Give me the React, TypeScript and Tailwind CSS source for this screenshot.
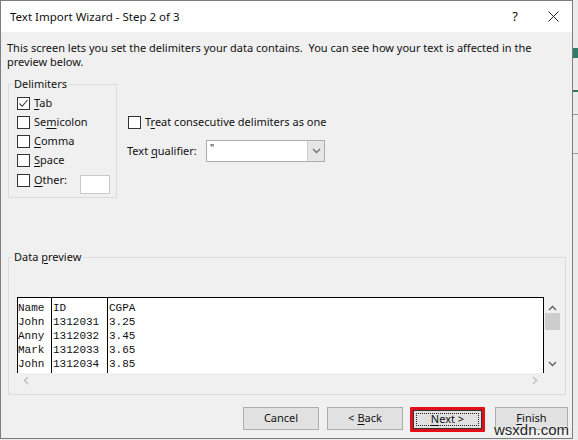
import React from 'react'

const ui = { fontFamily: '"Noto Sans", "Open Sans", sans-serif' }
const mono = { fontFamily: '"Liberation Mono", "Courier New", monospace' }

const rows = [
  ['Name', 'ID', 'CGPA'],
  ['John', '1312031', '3.25'],
  ['Anny', '1312032', '3.45'],
  ['Mark', '1312033', '3.65'],
  ['John', '1312034', '3.85'],
]

function Box({ checked }: { checked?: boolean }) {
  return (
    <span className="w-[13px] h-[13px] border border-[#333] bg-white flex items-center justify-center shrink-0">
      {checked && (
        <svg width="11" height="11" viewBox="0 0 11 11">
          <path d="M1.5 5.5 L4.2 8.3 L9.5 2" fill="none" stroke="#333" strokeWidth="1.1" />
        </svg>
      )}
    </span>
  )
}

function Check({ pre, k, post, checked }: { pre?: string; k: string; post: string; checked?: boolean }) {
  return (
    <div className="h-[19px] flex items-center gap-[4px]">
      <Box checked={checked} />
      <span>
        {pre}
        <span className="underline underline-offset-2">{k}</span>
        {post}
      </span>
    </div>
  )
}

function Chevron({ up, color = '#606060' }: { up?: boolean; color?: string }) {
  return (
    <svg width="9" height="6" viewBox="0 0 9 6">
      <path d={up ? 'M1 5 L4.5 1.5 L8 5' : 'M1 1 L4.5 4.5 L8 1'} fill="none" stroke={color} strokeWidth="1.4" />
    </svg>
  )
}

function Button({ children, w }: { children: React.ReactNode; w: string }) {
  return (
    <div className={`${w} h-[23px] bg-[#e1e1e1] border border-[#adadad] flex items-center justify-center`}>
      {children}
    </div>
  )
}

export default function App() {
  return (
    <div className="w-[578px] h-[440px] flex bg-[#ececec] text-[11px] text-[#111] overflow-hidden" style={ui}>
      <div className="relative w-[573px] h-[439px] border border-[#7d7d7d] bg-[#f0f0f0] flex flex-col">
        {/* title bar */}
        <div className="h-[31px] bg-white flex items-center pl-[9px] shrink-0">
          <span className="text-[11.5px]">Text Import Wizard - Step 2 of 3</span>
          <span className="ml-auto mr-[30px] text-[13px]">?</span>
          <svg width="11" height="11" viewBox="0 0 11 11" className="mr-[13px]">
            <path d="M0.5 0.5 L10.5 10.5 M10.5 0.5 L0.5 10.5" stroke="#222" strokeWidth="1" />
          </svg>
        </div>

        <p className="px-[6px] pt-[9px] leading-[14px]">
          This screen lets you set the delimiters your data contains.&nbsp; You can see how your text is affected in the
          <br />
          preview below.
        </p>

        <div className="flex mt-[8px]">
          <fieldset className="ml-[7px] w-[109px] h-[121px] border border-[#dcdcdc] pl-[8px]">
            <legend className="px-[2px] -ml-[5px] leading-[14px]">Delimiters</legend>
            <div className="pt-[3px]">
              <Check k="T" post="ab" checked />
              <Check pre="Se" k="m" post="icolon" />
              <Check k="C" post="omma" />
              <Check k="S" post="pace" />
              <div className="h-[21px] flex items-center gap-[4px]">
                <Box />
                <span>
                  <span className="underline underline-offset-2">O</span>ther:
                </span>
                <div className="ml-[9px] w-[30px] h-[19px] bg-white border border-[#c8c8c8] mt-[7px]" />
              </div>
            </div>
          </fieldset>

          <div className="ml-[11px] pt-[36px] flex flex-col">
            <div className="h-[19px] flex items-center gap-[4px]">
              <Box />
              <span>
                T<span className="underline underline-offset-2">r</span>eat consecutive delimiters as one
              </span>
            </div>
            <div className="flex items-center mt-[8px]">
              <span className="w-[79px] -ml-px">
                Text <span className="underline underline-offset-2">q</span>ualifier:
              </span>
              <div className="w-[119px] h-[22px] bg-white border border-[#adadad] flex">
                <span className="flex-1 pl-[3px] leading-[14px] text-[10px]">"</span>
                <div className="w-[17px] bg-[#e6e6e6] border-l border-[#cfcfcf] flex items-center justify-center">
                  <Chevron color="#707070" />
                </div>
              </div>
            </div>
          </div>
        </div>

        <fieldset className="mx-[7px] mt-[52px] h-[145px] border border-[#dcdcdc] pl-[8px] pr-[4px]">
          <legend className="px-[2px] -ml-[5px] leading-[14px]">
            Data <span className="underline underline-offset-2">p</span>review
          </legend>
          <div className="mt-[33px] flex">
            <div className="w-[527px] h-[76px] bg-white border-t border-l border-r border-black flex text-[11px] leading-[14px] pt-[3px]" style={mono}>
              <div className="w-[34px] border-r border-black -mt-[3px] pt-[3px]">
                {rows.map((r, i) => (
                  <div key={i}>{r[0]}</div>
                ))}
              </div>
              <div className="w-[56px] border-r border-black -mt-[3px] pt-[3px] pl-px">
                {rows.map((r, i) => (
                  <div key={i}>{r[1]}</div>
                ))}
              </div>
              <div className="pl-px">
                {rows.map((r, i) => (
                  <div key={i}>{r[2]}</div>
                ))}
              </div>
            </div>
            <div className="w-[17px] h-[76px] flex flex-col items-center">
              <div className="h-[16px] flex items-end justify-center pb-[2px]">
                <Chevron up />
              </div>
              <div className="w-[15px] h-[17px] bg-[#cdcdcd]" />
              <div className="flex-1 flex items-end justify-center pb-[6px]">
                <Chevron />
              </div>
            </div>
          </div>
          <div className="w-[527px] h-[14px] flex items-center justify-between px-[6px]">
            <svg width="6" height="9" viewBox="0 0 6 9">
              <path d="M5 1 L1.5 4.5 L5 8" fill="none" stroke="#bdbdbd" strokeWidth="1.4" />
            </svg>
            <svg width="6" height="9" viewBox="0 0 6 9">
              <path d="M1 1 L4.5 4.5 L1 8" fill="none" stroke="#bdbdbd" strokeWidth="1.4" />
            </svg>
          </div>
        </fieldset>

        <div className="flex items-start mt-[12px] pl-[242px]">
          <Button w="w-[76px]">Cancel</Button>
          <div className="ml-[8px]">
            <Button w="w-[76px]">
              &lt; <span className="underline underline-offset-2 ml-[3px]">B</span>ack
            </Button>
          </div>
          <div className="ml-[7px] w-[75px] h-[25px] border-[3px] border-[#e0101a] rounded-[1px]">
            <div className="w-full h-full bg-[#e1e1e1] border border-[#333] flex items-center justify-center">
              <div className="w-[63px] h-[13px] border border-dotted border-[#222] flex items-center justify-center">
                <span>
                  <span className="underline underline-offset-2">N</span>ext &gt;
                </span>
              </div>
            </div>
          </div>
          <div className="ml-[10px]">
            <Button w="w-[73px]">
              <span>
                <span className="underline underline-offset-2">F</span>inish
              </span>
            </Button>
          </div>
        </div>

        <span
          className="absolute right-[3px] bottom-[0px] text-[15px] leading-[17px] text-[#222]"
          style={{ fontFamily: '"Liberation Sans", Arial, sans-serif', textShadow: '0 0 2px #fff, 0 0 2px #fff' }}
        >
          wsxdn.com
        </span>
      </div>

      {/* sliver of the sheet behind the dialog */}
      <div className="flex-1 flex flex-col pt-[48px] gap-[8px]">
        <div className="h-[10px] bg-[#2e7d6b]" />
        <div className="h-[2px] mt-[24px] bg-[#2e7d4f]" />
        <div className="h-[1px] mt-[14px] bg-[#9a9a9a]" />
        <div className="h-[1px] mt-[30px] bg-[#9a9a9a]" />
      </div>
    </div>
  )
}
